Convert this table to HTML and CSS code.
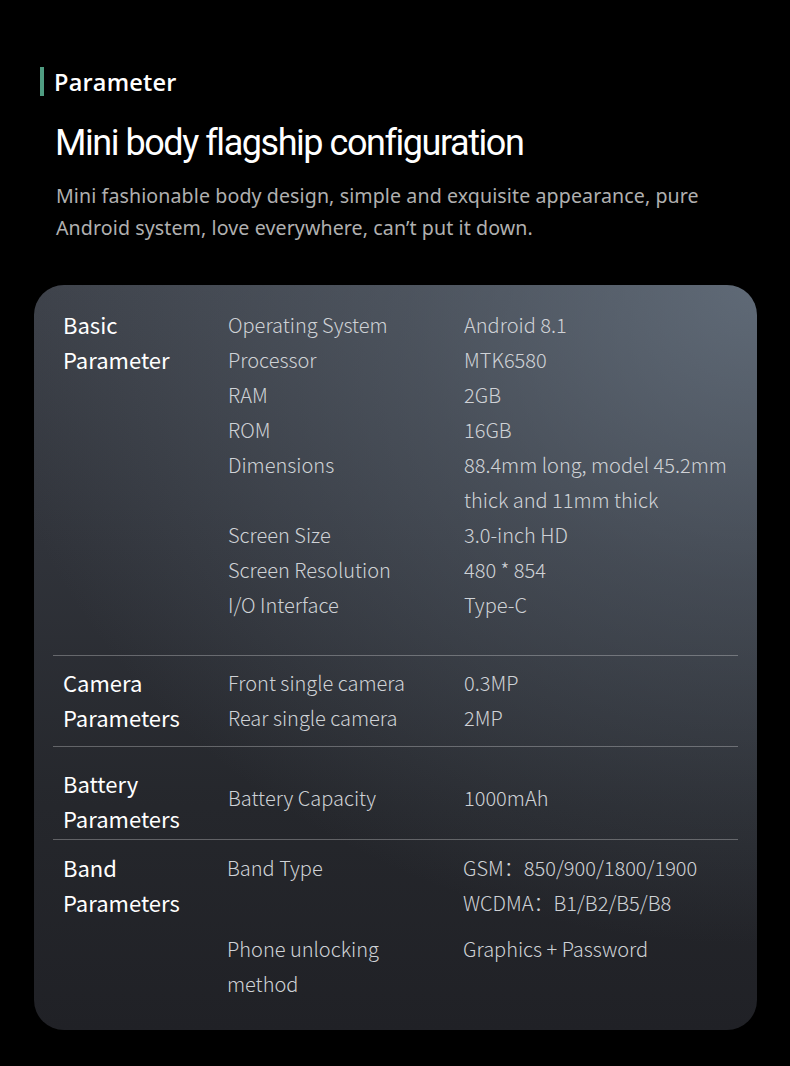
FILE: index.html
```html
<!DOCTYPE html>
<html lang="en">
<head>
<meta charset="utf-8">
<title>Parameter</title>
<link rel="stylesheet" href="styles.css">
</head>
<body>
<div class="page">
  <header class="intro">
    <div class="tag"><span class="tag-bar"></span><span class="tag-text">Parameter</span></div>
    <h1 class="title">Mini body flagship configuration</h1>
    <p class="subtitle">Mini fashionable body design, simple and exquisite appearance, pure<br>Android system, love everywhere, can’t put it down.</p>
  </header>

  <section class="card">
    <div class="group group-basic">
      <div class="group-name">Basic<br>Parameter</div>
      <div class="rows">
        <div class="k">Operating System</div><div class="v">Android 8.1</div>
        <div class="k">Processor</div><div class="v">MTK6580</div>
        <div class="k">RAM</div><div class="v">2GB</div>
        <div class="k">ROM</div><div class="v">16GB</div>
        <div class="k">Dimensions</div><div class="v">88.4mm long, model 45.2mm<br>thick and 11mm thick</div>
        <div class="k">Screen Size</div><div class="v">3.0-inch HD</div>
        <div class="k">Screen Resolution</div><div class="v">480 * 854</div>
        <div class="k">I/O Interface</div><div class="v">Type-C</div>
      </div>
    </div>
    <div class="group group-camera">
      <div class="group-name">Camera<br>Parameters</div>
      <div class="rows">
        <div class="k">Front single camera</div><div class="v">0.3MP</div>
        <div class="k">Rear single camera</div><div class="v">2MP</div>
      </div>
    </div>
    <div class="group group-battery">
      <div class="group-name">Battery<br>Parameters</div>
      <div class="rows rows-center">
        <div class="k">Battery Capacity</div><div class="v">1000mAh</div>
      </div>
    </div>
    <div class="group group-band">
      <div class="group-name">Band<br>Parameters</div>
      <div class="rows">
        <div class="k">Band Type</div><div class="v">GSM：850/900/1800/1900<br>WCDMA：B1/B2/B5/B8</div>
        <div class="k k-gap">Phone unlocking<br>method</div><div class="v k-gap">Graphics + Password</div>
      </div>
    </div>
  </section>
</div>
</body>
</html>
```

FILE: styles.css
```css
* { box-sizing: border-box; }
html, body { margin: 0; padding: 0; background: #000; }
body { width: 790px; height: 1066px; overflow: hidden; }

.page { padding-top: 66px; }

.intro { padding-left: 40px; }
.tag { display: flex; align-items: center; height: 31px; }
.tag-bar { width: 4px; height: 29px; background: #4f9c81; }
.tag-text {
  margin-left: 10px;
  font-family: "Open Sans", "Noto Sans", sans-serif;
  font-weight: 600;
  font-size: 23.5px;
  color: #fff;
  letter-spacing: 0.2px;
}
.title {
  margin: 20px 0 0 15px;
  font-family: "Roboto", "Noto Sans", sans-serif;
  font-weight: 400;
  font-size: 36px;
  line-height: 52px;
  color: #fff;
  letter-spacing: -1.45px;
}
.subtitle {
  margin: 11px 0 0 16px;
  font-family: "Noto Sans", "Open Sans", sans-serif;
  font-size: 19.6px;
  line-height: 32px;
  color: #b0b0b0;
  letter-spacing: 0.1px;
}

.card {
  margin: 41px 0 0 34px;
  width: 723px;
  height: 745px;
  border-radius: 30px;
  padding: 0 19px;
  background:
    radial-gradient(ellipse 780px 660px at 100% 0%, rgba(104,116,130,0.8), rgba(104,116,130,0.38) 45%, rgba(104,116,130,0) 100%),
    linear-gradient(180deg, #3c4048 0%, #30333a 35%, #25272c 70%, #202126 100%);
  font-family: "Noto Sans CJK SC", "Noto Sans", sans-serif;
}

.group {
  display: flex;
  border-bottom: 1px solid rgba(255,255,255,0.28);
}
.group:last-child { border-bottom: none; }
.group-basic { padding: 22px 0 33px; }
.group-camera { padding: 9px 0 11px; }
.group-battery { padding: 19px 0 3px; }
.group-band { padding: 10px 0 0; }

.group-name {
  width: 175px;
  padding-left: 10px;
  font-size: 22px;
  line-height: 35px;
  color: #fff;
}
.rows {
  display: grid;
  grid-template-columns: 236px 1fr;
  align-content: start;
  font-size: 20px;
  line-height: 35px;
  color: #cfd2d6;
  font-weight: 300;
}
.rows-center { align-content: center; padding-bottom: 7px; }
.group-band .rows { margin-left: -1px; }
.k-gap { margin-top: 11px; }
```
